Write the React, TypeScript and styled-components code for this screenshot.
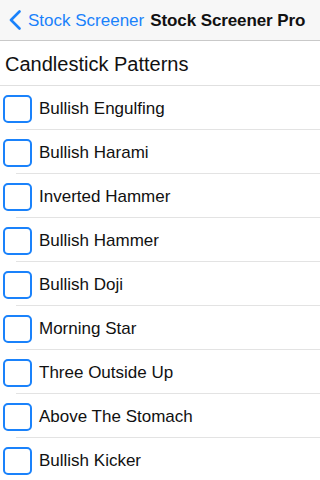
import React from "react";
import styled, { createGlobalStyle } from "styled-components";

const patterns = [
  "Bullish Engulfing",
  "Bullish Harami",
  "Inverted Hammer",
  "Bullish Hammer",
  "Bullish Doji",
  "Morning Star",
  "Three Outside Up",
  "Above The Stomach",
  "Bullish Kicker",
];

const GlobalStyle = createGlobalStyle`
  html, body {
    margin: 0;
    padding: 0;
    background: #ffffff;
    font-family: "Liberation Sans", Arial, sans-serif;
    color: #111111;
  }
`;

const Screen = styled.div`
  width: 320px;
  height: 480px;
  overflow: hidden;
  background: #ffffff;
`;

const NavBar = styled.div`
  height: 40px;
  display: flex;
  align-items: center;
  background: #f7f7f7;
  border-bottom: 1px solid #c9c9c9;
  padding-left: 9px;
`;

const BackButton = styled.div`
  display: flex;
  align-items: center;
  gap: 7px;
  color: #1a82fb;
  font-size: 17px;
  padding-top: 1px;
  & > svg {
    flex-shrink: 0;
    margin-top: -1px;
  }
`;

const Title = styled.div`
  margin-left: 6px;
  padding-top: 1px;
  font-size: 17px;
  font-weight: bold;
  letter-spacing: -0.1px;
  color: #111111;
  white-space: nowrap;
`;

const SectionHeader = styled.div`
  height: 42px;
  display: flex;
  align-items: center;
  padding: 2px 0 0 5px;
  font-size: 20px;
  border-bottom: 1px solid #e0e0e0;
`;

const Row = styled.div`
  height: 44px;
  display: flex;
  align-items: center;
  position: relative;
  &::after {
    content: "";
    position: absolute;
    left: 16px;
    right: 0;
    bottom: 0;
    height: 1px;
    background: #e3e3e3;
  }
`;

const Box = styled.div<{ $checked?: boolean }>`
  width: 25px;
  height: 24px;
  margin-left: 3px;
  margin-top: 1px;
  border: 2px solid #1a82fb;
  border-radius: 5px;
  background: ${(p) => (p.$checked ? "#1a82fb" : "transparent")};
  flex-shrink: 0;
`;

const Label = styled.div`
  margin-left: 7px;
  padding-top: 2px;
  font-size: 17px;
  color: #111111;
`;

const Chevron = () => (
  <svg width="12" height="20" viewBox="0 0 12 20">
    <path
      d="M10.5 1.5 L2 10 L10.5 18.5"
      fill="none"
      stroke="#1a82fb"
      strokeWidth="2.6"
      strokeLinecap="round"
      strokeLinejoin="round"
    />
  </svg>
);

const App = () => {
  return (
    <Screen>
      <GlobalStyle />
      <NavBar>
        <BackButton>
          <Chevron />
          Stock Screener
        </BackButton>
        <Title>Stock Screener Pro</Title>
      </NavBar>
      <SectionHeader>Candlestick Patterns</SectionHeader>
      {patterns.map((p) => (
        <Row key={p}>
          <Box />
          <Label>{p}</Label>
        </Row>
      ))}
    </Screen>
  );
};

export default App;
